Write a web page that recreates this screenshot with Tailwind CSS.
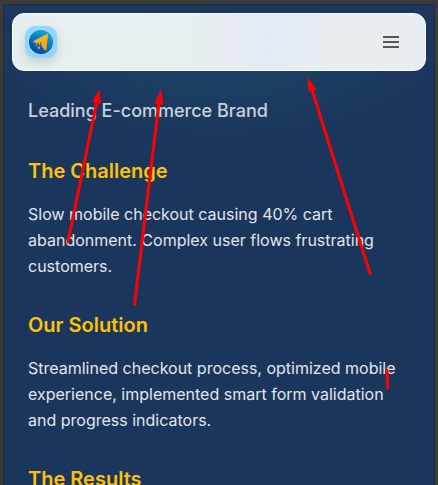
<!DOCTYPE html>
<html lang="en">
<head>
<meta charset="utf-8">
<title>Case study</title>
<script src="https://cdn.jsdelivr.net/npm/@tailwindcss/browser@4"></script>
</head>
<body class="h-[485px] overflow-hidden bg-[#3b3b3b] pl-[3px] pr-[3px] pt-1 font-['Inter',sans-serif]">
<div class="relative h-[481px] overflow-hidden border-x border-t border-[#292c30] bg-[#1b365d] px-2 pt-2">
  <div class="absolute inset-x-0 top-0 h-32 bg-[radial-gradient(ellipse_at_50%_35%,#1b4065_0%,#1b3e63_35%,#1b365d_72%)]"></div>
  <div class="absolute inset-x-0 top-0 h-2 bg-[#1b365f]"></div>
  <header class="relative flex h-[58px] items-center justify-between rounded-xl border border-[#fafdfd] bg-[linear-gradient(100deg,#e7eef0_0%,#e7f0f1_35%,#e7edf1_50%,#e5ebf5_62%,#e7edf0_76%,#e8edf1_100%)] pl-3 pr-[26px]">
    <div class="flex size-8 items-center justify-center rounded-[10px] bg-[#93d5fc] shadow-[0_4px_10px_rgba(50,80,100,0.2)]">
      <svg class="size-6" viewBox="0 0 24 24">
        <defs>
          <linearGradient id="disc" x1=".75" y1="0" x2=".25" y2="1"><stop stop-color="#12b5dc"/><stop offset=".5" stop-color="#0875c5"/><stop offset="1" stop-color="#073f9d"/></linearGradient>
          <linearGradient id="arrow" x1="0" y1="0" x2="1" y2="1"><stop stop-color="#ffc91c"/><stop offset="1" stop-color="#f59a13"/></linearGradient>
        </defs>
        <circle cx="12" cy="12" r="12" fill="url(#disc)"/>
        <path d="M18 3.900 4.700 11c-.9.500-.6 1.400.3 1.400h2V14h1.300v-1.600h1.400v2.400h1.500v-2.600h1.200v3.300l3 4.300c.8 1.200 2.100.7 2.200-.5L19 5c.1-1.100-.2-1.500-1-1.100Z" fill="url(#arrow)"/>
        <path d="M8.700 16.400h2.300v2.400H8.700zM6.500 14.800h1.200V16H6.500z" fill="#f5a01e"/>
      </svg>
    </div>
    <svg class="h-3.5 w-4" viewBox="0 0 16 14" fill="#55565c"><path d="M0 1h16v2H0zM0 6h16v2H0zM0 11h16v2H0z"/></svg>
  </header>
  <main class="relative px-4 pt-[26px] text-base leading-[26px] text-[#e1e6eb]">
    <p class="text-lg font-medium leading-7 text-[#c8d1db]">Leading E-commerce Brand</p>
    <h2 class="mt-[30px] text-xl font-semibold leading-8 text-[#ffc107]">The Challenge</h2>
    <p class="mt-[14px]">Slow mobile checkout causing 40% cart<br>abandonment. Complex user flows frustrating<br>customers.</p>
    <h2 class="mt-[30px] text-xl font-semibold leading-8 text-[#ffc107]">Our Solution</h2>
    <p class="mt-[14px]">Streamlined checkout process, optimized mobile<br>experience, implemented smart form validation<br>and progress indicators.</p>
    <h2 class="mt-[30px] text-xl font-semibold leading-8 text-[#ffc107]">The Results</h2>
  </main>
</div>
<svg class="pointer-events-none absolute left-0 top-0 h-[485px] w-[438px]" viewBox="0 0 438 485">
  <g stroke="#f00" stroke-width="3" stroke-linecap="round">
    <path d="M68 241.500 97 101M134.500 304.500 159 102M370 273.500 312 90M387 370.500l.8 17"/>
  </g>
  <path d="m99.500 89 1.500 15-9-2zM161 89l2.500 15.500-9-1zM307.500 77l9 12.500-8 2.500z" fill="#f00"/>
</svg>
</body>
</html>
